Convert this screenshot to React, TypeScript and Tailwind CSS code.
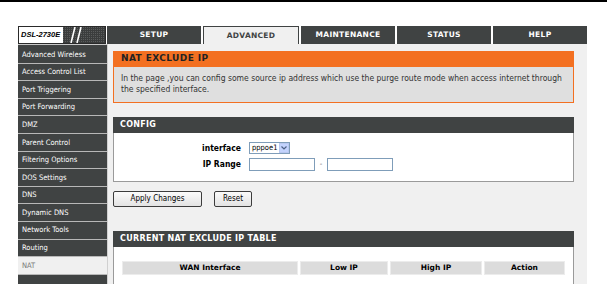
import React from "react";

const side = [
  "Advanced Wireless",
  "Access Control List",
  "Port Triggering",
  "Port Forwarding",
  "DMZ",
  "Parent Control",
  "Filtering Options",
  "DOS Settings",
  "DNS",
  "Dynamic DNS",
  "Network Tools",
  "Routing",
  "NAT",
];

const tabs = ["SETUP", "ADVANCED", "MAINTENANCE", "STATUS", "HELP"];

const V = { fontFamily: '"DejaVu Sans", Verdana, sans-serif' };
const T = { fontFamily: '"DejaVu Sans Condensed", "DejaVu Sans", Tahoma, sans-serif' };
const L = { fontFamily: '"Liberation Sans", Arial, sans-serif' };

export default function App() {
  return (
    <div className="w-[607px] h-[284px] overflow-hidden bg-white relative" style={V}>
      <div className="h-[2px] bg-black" />
      <div className="h-[24px]" />
      {/* header row */}
      <div className="ml-[18px] w-[569px] h-[18px] flex">
        <div className="w-[88px] h-[18px] flex bg-[#3d3f3f] border border-[#2a2a2a]">
          <div className="w-[44px] h-[16px] bg-white flex items-center pl-[2px] whitespace-nowrap overflow-hidden">
            <span className="text-[7.5px] font-bold italic text-black leading-none" style={L}>DSL-2730E</span>
          </div>
          <svg width="42" height="16" viewBox="0 0 42 16">
            <defs>
              <pattern id="dots" width="2" height="2" patternUnits="userSpaceOnUse">
                <rect width="2" height="2" fill="#3b3d3d" />
                <rect width="1" height="1" fill="#5a5c5c" />
              </pattern>
            </defs>
            <rect width="42" height="16" fill="url(#dots)" />
            <path d="M8 16 L12 0 M14 16 L18 0" stroke="#ffffff" strokeWidth="1.6" />
          </svg>
        </div>
        <div className="ml-[1px] flex-1 flex gap-[2px]">
          {tabs.map((t) => (
            <div
              key={t}
              className={
                t === "ADVANCED"
                  ? "flex-1 h-[18px] bg-[#f0f0f0] border-t border-l border-r border-[#404343] flex items-center justify-center text-[7.5px] font-bold text-[#404343] tracking-[0.3px]"
                  : "flex-1 h-[18px] bg-[#404343] flex items-center justify-center text-[7.5px] font-bold text-white tracking-[0.3px]"
              }
            >
              {t}
            </div>
          ))}
        </div>
      </div>
      {/* body row */}
      <div className="ml-[18px] w-[569px] flex">
        <div className="w-[89px] flex flex-col bg-[#404343] pt-[1px] border-t border-[#c8c8c8]">
          {side.map((s) => (
            <div
              key={s}
              className={
                s === "NAT"
                  ? "h-[17.6px] box-border bg-[#f0f0f0] border-b border-[#b8b8b8] flex items-center pl-[4px] text-[7.5px] text-[#7a7a7a] leading-none"
                  : "h-[17.6px] box-border bg-[#404343] border-b border-[#b8b8b8] flex items-center pl-[4px] text-[7.5px] text-white leading-none"
              }
              style={T}
            >
              {s}
            </div>
          ))}
          <div className="h-[20px] bg-[#404343]" />
        </div>
        <div className="w-[1px] bg-[#d0d0d0]" />
        <div className="flex-1 bg-[#f0f0f0] pl-[5px] pr-[13px] pt-[7px] h-[240px]">
          {/* NAT EXCLUDE IP */}
          <div className="h-[16px] bg-[#f37021] flex items-center pl-[8px] text-[9px] font-bold text-[#222] tracking-[0.4px]">
            NAT EXCLUDE IP
          </div>
          <div className="h-[36px] bg-[#dfdfdf] border-l border-r border-b border-[#f37021] px-[7px] pt-[6px] text-[8.5px] leading-[11px] text-[#333]" style={T}>
            In the page ,you can config some source ip address which use the purge route mode when access internet through the specified interface.
          </div>
          {/* CONFIG */}
          <div className="mt-[14px] h-[16px] bg-[#404343] flex items-center pl-[7px] text-[8px] font-bold text-white tracking-[0.3px]">
            CONFIG
          </div>
          <div className="h-[49px] bg-white border-l border-r border-b border-[#9a9a9a] pt-[9px]">
            <div className="flex items-center h-[12px]">
              <div className="w-[135px] text-right pr-[8px] text-[8.5px] font-bold text-black" style={T}>interface</div>
              <div className="flex items-center h-[12px] border border-[#7f9db9] bg-white">
                <span className="text-[7.5px] px-[2px] text-black leading-none" style={T}>pppoe1</span>
                <div className="w-[10px] h-[10px] bg-[#c3d3fd] border border-[#b8c8f0] flex items-center justify-center">
                  <svg width="6" height="4" viewBox="0 0 6 4">
                    <path d="M0.5 0.5 L3 3 L5.5 0.5" stroke="#4d6185" strokeWidth="1.2" fill="none" />
                  </svg>
                </div>
              </div>
            </div>
            <div className="flex items-center h-[13px] mt-[4px]">
              <div className="w-[135px] text-right pr-[8px] text-[8.5px] font-bold text-black" style={T}>IP Range</div>
              <div className="w-[66px] h-[13px] border border-[#7f9db9] bg-white" />
              <span className="w-[12px] text-center text-[7px] text-[#555]">-</span>
              <div className="w-[66px] h-[13px] border border-[#7f9db9] bg-white" />
            </div>
          </div>
          {/* buttons */}
          <div className="mt-[9px] flex gap-[12px]">
            <div className="w-[89px] h-[16px] rounded-[2px] border border-[#3c3c3c] bg-gradient-to-b from-[#fbfbfb] to-[#e3e3e3] flex items-center justify-center text-[8px] text-black" style={T}>
              Apply Changes
            </div>
            <div className="w-[38px] h-[16px] rounded-[2px] border border-[#3c3c3c] bg-gradient-to-b from-[#fbfbfb] to-[#e3e3e3] flex items-center justify-center text-[8px] text-black" style={T}>
              Reset
            </div>
          </div>
          {/* table */}
          <div className="mt-[24px] h-[16px] bg-[#404343] flex items-center pl-[7px] text-[8px] font-bold text-white tracking-[0.3px]">
            CURRENT NAT EXCLUDE IP TABLE
          </div>
          <div className="h-[40px] bg-white border-l border-r border-[#9a9a9a] pt-[14px] px-[8px]">
            <div className="flex gap-[2px] h-[14px]">
              {[
                ["WAN Interface", "w-[176px]"],
                ["Low IP", "w-[88px]"],
                ["High IP", "w-[92px]"],
                ["Action", "flex-1"],
              ].map(([l, w]) => (
                <div key={l} className={w + " h-[14px] bg-[#dcdcdc] border border-[#ececec] flex items-center justify-center text-[7.5px] font-bold text-black"}>
                  {l}
                </div>
              ))}
            </div>
          </div>
        </div>
      </div>
    </div>
  );
}
